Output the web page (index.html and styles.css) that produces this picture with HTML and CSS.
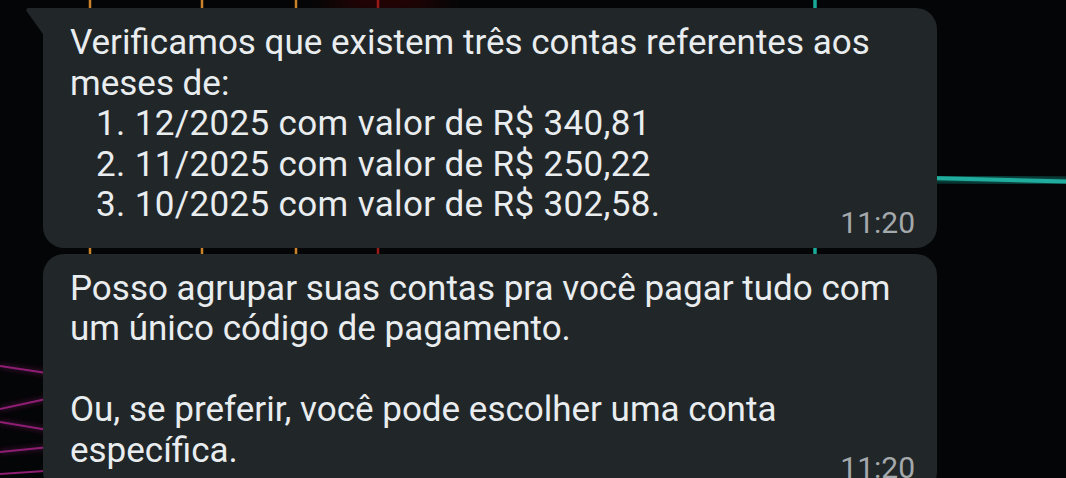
FILE: index.html
```html
<!DOCTYPE html>
<html lang="pt-BR">
<head>
    <meta charset="UTF-8">
    <meta name="viewport" content="width=device-width, initial-scale=1.0">
    <title>Conversa</title>
    <link rel="stylesheet" href="styles.css">
</head>
<body>
    <!-- Papel de parede -->
    <div class="wallpaper">
        <svg width="1066" height="478" viewBox="0 0 1066 478">
            <defs>
                <filter id="glow" x="-50%" y="-50%" width="200%" height="200%">
                    <feGaussianBlur stdDeviation="2.5"/>
                </filter>
                <filter id="haze" x="-50%" y="-50%" width="200%" height="200%">
                    <feGaussianBlur stdDeviation="14"/>
                </filter>
            </defs>
            <ellipse cx="385" cy="0" rx="60" ry="8" fill="#4a0a0a" filter="url(#haze)"/>
            <g stroke-linecap="round">
                <line x1="90" y1="0" x2="90" y2="478" stroke="#b0601a" stroke-width="6" opacity="0.45" filter="url(#glow)"/>
                <line x1="90" y1="0" x2="90" y2="478" stroke="#c9822a" stroke-width="2.5"/>
                <line x1="202" y1="0" x2="202" y2="478" stroke="#b0601a" stroke-width="6" opacity="0.45" filter="url(#glow)"/>
                <line x1="202" y1="0" x2="202" y2="478" stroke="#c9822a" stroke-width="2.5"/>
                <line x1="296" y1="0" x2="296" y2="478" stroke="#b0601a" stroke-width="6" opacity="0.45" filter="url(#glow)"/>
                <line x1="296" y1="0" x2="296" y2="478" stroke="#c9822a" stroke-width="2.5"/>
                <line x1="378" y1="0" x2="378" y2="478" stroke="#9a1a1a" stroke-width="2.5"/>
                <line x1="815" y1="0" x2="815" y2="478" stroke="#14a595" stroke-width="7" opacity="0.45" filter="url(#glow)"/>
                <line x1="815" y1="0" x2="815" y2="478" stroke="#1aa898" stroke-width="3.5"/>
                <line x1="930" y1="178" x2="1066" y2="181.5" stroke="#14a595" stroke-width="9" opacity="0.5" filter="url(#glow)"/>
                <line x1="930" y1="178" x2="1066" y2="181.5" stroke="#20ad9e" stroke-width="4"/>
            </g>
            <g stroke="#8e1f73" stroke-width="1.8" fill="none">
                <line x1="0" y1="366" x2="60" y2="375"/>
                <line x1="0" y1="409" x2="60" y2="396"/>
                <line x1="0" y1="422" x2="60" y2="432"/>
                <line x1="0" y1="452" x2="60" y2="446"/>
                <line x1="0" y1="474" x2="60" y2="470"/>
            </g>
            <g stroke="#8e1f73" stroke-width="5" fill="none" opacity="0.3" filter="url(#glow)">
                <line x1="0" y1="366" x2="60" y2="375"/>
                <line x1="0" y1="409" x2="60" y2="396"/>
                <line x1="0" y1="422" x2="60" y2="432"/>
                <line x1="0" y1="452" x2="60" y2="446"/>
            </g>
        </svg>
    </div>

    <!-- Mensagens -->
    <main class="chat">
        <div class="bubble bubble-first">
            <div class="text">
                Verificamos que existem três contas referentes aos meses de:
                <ol class="list">
                    <li>12/2025 com valor de R$ 340,81</li>
                    <li>11/2025 com valor de R$ 250,22</li>
                    <li>10/2025 com valor de R$ 302,58.</li>
                </ol>
            </div>
            <div class="time">11:20</div>
        </div>

        <div class="bubble">
            <div class="text">
                Posso agrupar suas contas pra você pagar tudo com um único código de pagamento.
                <br><br>
                Ou, se preferir, você pode escolher uma conta específica.
            </div>
            <div class="time">11:20</div>
        </div>
    </main>
</body>
</html>
```

FILE: styles.css
```css
body {
    margin: 0;
    padding: 0;
    background-color: #040506;
    font-family: Roboto, "Noto Sans", sans-serif;
    overflow: hidden;
    height: 478px;
}
.wallpaper {
    position: absolute;
    top: 0;
    left: 0;
    z-index: 0;
    line-height: 0;
}
.chat {
    position: relative;
    z-index: 1;
    display: flex;
    flex-direction: column;
    gap: 6px;
    padding: 8px 0 0 43px;
}
.bubble {
    position: relative;
    width: 894px;
    box-sizing: border-box;
    padding: 15px 22px 11px 27px;
    background-color: #212629;
    border-radius: 21px;
}
.bubble-first {
    border-top-left-radius: 0;
}
.bubble-first::before {
    content: '';
    position: absolute;
    top: 0;
    left: -17px;
    width: 17px;
    height: 26px;
    background-color: #212629;
    clip-path: polygon(2px 0, 100% 0, 100% 100%, 0.6px 3.2px, 0 1.5px);
}
.text {
    color: #e9edef;
    font-size: 35px;
    line-height: 40.5px;
}
.list {
    margin: 0;
    padding: 0 0 0 26px;
    list-style-position: inside;
    letter-spacing: 0.35px;
}
.time {
    margin-top: -17px;
    text-align: right;
    color: #a4a9ac;
    font-size: 30px;
    line-height: 28px;
}
```
